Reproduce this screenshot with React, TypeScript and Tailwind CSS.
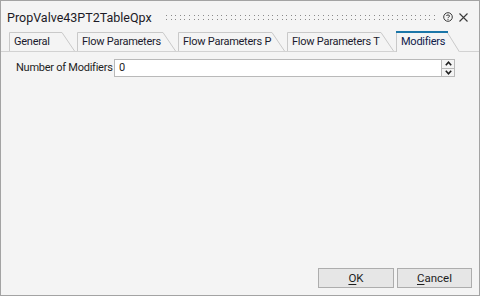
import React from "react";

const tabs = [
  { label: "General", w: "w-[66px]", sw: 66 },
  { label: "Flow Parameters", w: "w-[99px]", sw: 99 },
  { label: "Flow Parameters P", w: "w-[107px]", sw: 107 },
  { label: "Flow Parameters T", w: "w-[107px]", sw: 107 },
];

function Tab({ label, w, sw }: { label: string; w: string; sw: number }) {
  return (
    <div className={`relative h-[19px] shrink-0 ${w}`}>
      <svg className="absolute inset-0" width={sw} height={19}>
        <polyline
          points={`0.5,19 0.5,0.5 ${sw - 13},0.5 ${sw - 0.5},19`}
          fill="none"
          stroke="#c9c9c9"
          strokeWidth="1"
        />
      </svg>
      <div className="relative pl-[5px] pt-[2px] text-[11px] tracking-[-0.25px] leading-[16px] text-[#1b1b2e] whitespace-nowrap">
        {label}
      </div>
    </div>
  );
}

function Grip() {
  const dots = [];
  for (let i = 0; i < 59; i++) {
    const x = Math.round(i * 4.62);
    dots.push(<rect key={"a" + i} x={x} y={0} width={1} height={1} fill="#8a8a8a" />);
    dots.push(<rect key={"b" + i} x={x} y={4} width={1} height={1} fill="#8a8a8a" />);
  }
  return (
    <svg width={272} height={5} className="shrink-0">
      {dots}
    </svg>
  );
}

export default function App() {
  return (
    <div className="w-[480px] h-[296px] border border-[#a3a3a3] bg-[#f4f4f4] flex flex-col font-[Roboto,'Liberation_Sans',sans-serif] text-[#1e1e1e] overflow-hidden">
      {/* title bar */}
      <div className="h-[30px] flex items-center shrink-0">
        <div className="pl-[6px] pt-[3px] text-[12.5px] leading-[18px] text-[#1c1a26] w-[159px] whitespace-nowrap">
          PropValve43PT2TableQpx
        </div>
        <div className="ml-[6px] mt-[2px]">
          <Grip />
        </div>
        <div className="ml-[5px] mt-[2px] flex items-center">
          <svg width="10" height="10" viewBox="0 0 10 10">
            <circle cx="5" cy="5" r="4.3" fill="none" stroke="#3a3a3a" strokeWidth="1" />
            <path d="M3.4 4 C3.4 2.6 6.6 2.6 6.6 4 C6.6 5 5 5 5 6.1" fill="none" stroke="#3a3a3a" strokeWidth="1" />
            <rect x="4.5" y="6.9" width="1" height="1" fill="#3a3a3a" />
          </svg>
          <svg width="9" height="9" viewBox="0 0 9 9" className="ml-[6px]">
            <path d="M0.5 0.5 L8.5 8.5 M8.5 0.5 L0.5 8.5" stroke="#3a3a3a" strokeWidth="1.1" />
          </svg>
        </div>
      </div>

      {/* tab strip */}
      <div className="h-[21px] flex items-end gap-[2px] pl-[8px] border-b border-[#d2d2d2] shrink-0">
        {tabs.map((t) => (
          <Tab key={t.label} {...t} />
        ))}
        <div className="relative h-[21px] w-[64px] shrink-0 -mb-px bg-[#f4f4f4]">
          <svg className="absolute inset-0" width={64} height={21}>
            <polyline points="0.5,21 0.5,1 51,1 63.5,21" fill="none" stroke="#c9c9c9" strokeWidth="1" />
            <rect x="0" y="0" width="52" height="2" fill="#1b76a8" />
          </svg>
          <div className="relative pl-[5px] pt-[3px] text-[11px] tracking-[-0.25px] leading-[16px] text-[#10204a] whitespace-nowrap">
            Modifiers
          </div>
        </div>
      </div>

      {/* content */}
      <div className="flex-1 flex flex-col">
        <div className="mt-[7px] flex items-center pl-[15px]">
          <div className="w-[98px] text-[11px] tracking-[-0.25px] leading-[16px] text-[#1e1e1e] whitespace-nowrap">
            Number of Modifiers
          </div>
          <div className="w-[328px] h-[18px] bg-white border border-[#b9b9b9] flex items-center pl-[4px] text-[11px] text-[#1e1e1e]">
            0
          </div>
          <div className="w-[13px] h-[18px] border border-l-0 border-[#b9b9b9] bg-[#f4f4f4] flex flex-col">
            <div className="flex-1 flex items-center justify-center border-b border-[#b9b9b9]">
              <svg width="7" height="5" viewBox="0 0 7 5">
                <path d="M0.8 4.2 L3.5 1.2 L6.2 4.2" fill="none" stroke="#1e1e1e" strokeWidth="1.6" />
              </svg>
            </div>
            <div className="flex-1 flex items-center justify-center">
              <svg width="7" height="5" viewBox="0 0 7 5">
                <path d="M0.8 0.8 L3.5 3.8 L6.2 0.8" fill="none" stroke="#1e1e1e" strokeWidth="1.6" />
              </svg>
            </div>
          </div>
        </div>

        <div className="flex-1" />

        <div className="flex justify-end gap-[3px] pr-[7px] pb-[7px]">
          <button className="w-[76px] h-[20px] bg-[#e6e6e6] border border-[#adadad] text-[11.5px] leading-[16px] text-[#1e1e1e]">
            <span className="underline underline-offset-2">O</span>K
          </button>
          <button className="w-[75px] h-[20px] bg-[#e6e6e6] border border-[#adadad] text-[11.5px] leading-[16px] text-[#1e1e1e]">
            <span className="underline underline-offset-2">C</span>ancel
          </button>
        </div>
      </div>
    </div>
  );
}
